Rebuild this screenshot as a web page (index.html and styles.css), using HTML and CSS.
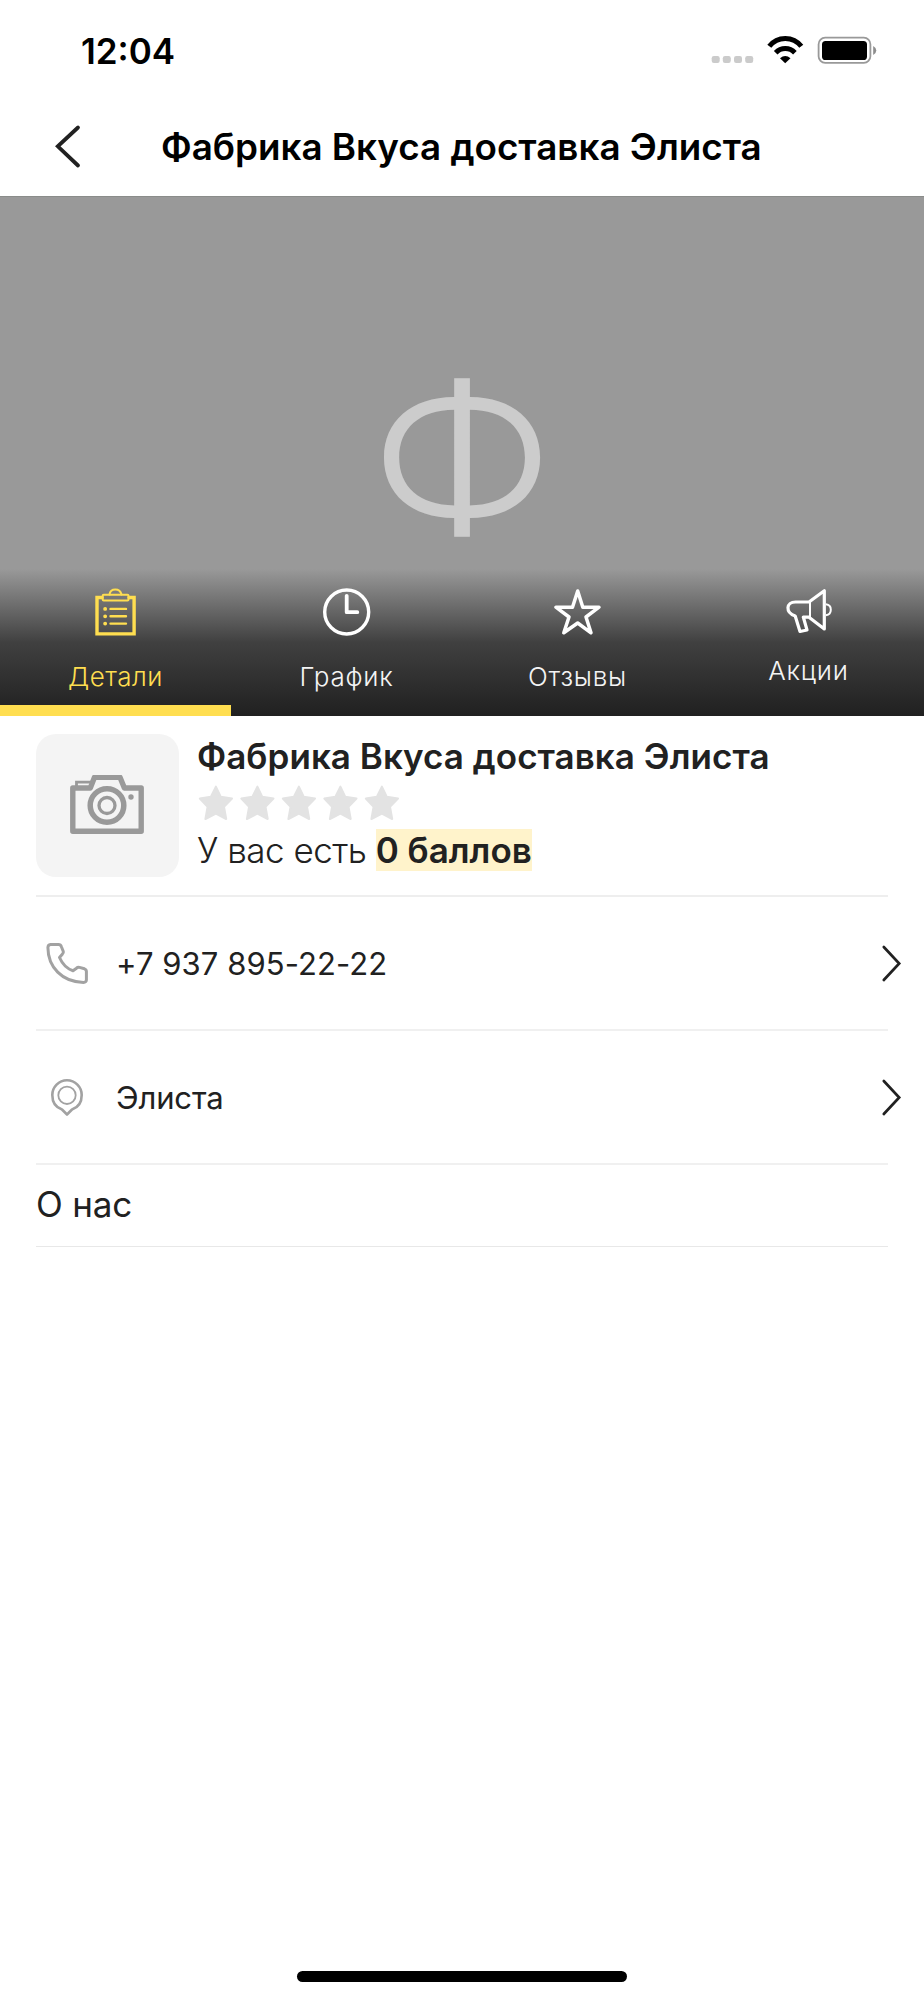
FILE: index.html
```html
<!DOCTYPE html>
<html lang="ru">
<head>
<meta charset="utf-8">
<title>Фабрика Вкуса доставка Элиста</title>
<link rel="stylesheet" href="styles.css">
</head>
<body>
<div class="screen">
  <header class="status">
    <span class="clock">12:04</span>
    <svg class="status-icons" width="168" height="30" viewBox="710 35 168 30">
      <g fill="#cbcbcb">
        <rect x="711.7" y="56" width="8" height="7" rx="2.2"/><rect x="722.8" y="56" width="8" height="7" rx="2.2"/><rect x="734" y="56" width="8" height="7" rx="2.2"/><rect x="745.2" y="56" width="8" height="7" rx="2.2"/>
      </g>
      <g fill="none" stroke="#000" stroke-width="5">
        <path d="M769.3 46.3A20.2 20.2 0 0 1 801.3 46.3"/>
        <path d="M775.7 52.7A13.2 13.2 0 0 1 794.9 52.7"/>
      </g>
      <path d="M780 58.2Q785.2 53.6 790.5 58.2L785.2 63.2Z"/>
      <rect x="818.6" y="37.6" width="51.8" height="25.2" rx="6.6" fill="none" stroke="#999" stroke-width="1.8"/>
      <rect x="822" y="41" width="45" height="19" rx="3.6"/>
      <path d="M873.2 46Q876.3 47.6 876.3 50.4T873.2 55Z" fill="#8d8d8d"/>
    </svg>
  </header>
  <nav class="navbar">
    <svg class="back" width="30" height="46" viewBox="53 123 30 46"><path d="M78 127.5L57.8 146.3L78 165.5" fill="none" stroke="#212121" stroke-width="3.8" stroke-linecap="round"/></svg>
    <h1 class="title">Фабрика Вкуса доставка Элиста</h1>
  </nav>
  <section class="hero">
    <div class="letter">Ф</div>
    <div class="tabs">
      <a class="tab active">
        <svg width="50" height="52" viewBox="91 585 50 52" fill="none" stroke="#ffde50" stroke-linecap="round" stroke-linejoin="round">
          <path stroke-width="3.4" stroke-linejoin="miter" d="M102 597.5H97V633.9H134.1V597.5H129"/>
          <rect x="102.7" y="594.7" width="25.8" height="5.8" rx="1" stroke-width="2"/>
          <path stroke-width="2" d="M109.5 594.5C110.5 587.8 120 587.8 121.5 594.5"/>
          <path stroke-width="2.4" d="M110.5 608.9H126M110.5 616.3H126M110.5 623.6H126"/>
          <path stroke-width="3.8" d="M105.1 608.9h.1M105.1 616.3h.1M105.1 623.6h.1"/>
        </svg>
        <span class="label">Детали</span>
      </a>
      <a class="tab">
        <svg width="50" height="52" viewBox="322 585 50 52" fill="none" stroke="#fff" stroke-linecap="round" stroke-linejoin="round">
          <circle cx="346.7" cy="612" r="22" stroke-width="3.4"/><path stroke-width="3.8" d="M346.7 595.8V612.2H357.3"/>
        </svg>
        <span class="label wide">График</span>
      </a>
      <a class="tab">
        <svg width="50" height="52" viewBox="553 585 50 52" fill="none" stroke="#fff" stroke-linejoin="round">
          <path stroke-width="3.5" d="M577.7 591L572.5 607.2H555.9L569 617L563.8 632.8L577.7 623L591 632.8L586 617L599 607.2H582.8Z"/>
        </svg>
        <span class="label wide">Отзывы</span>
      </a>
      <a class="tab high">
        <svg width="50" height="52" viewBox="784 585 50 52" fill="none" stroke="#fff" stroke-linejoin="round">
          <path stroke-width="3.2" d="M809 602L824.3 590.7V629L809 617.2L803.3 617L807 630L800 631.5L795.2 616C785 612.5 786 602 795.5 602Z"/>
          <path stroke-width="2" d="M810 602V617M826 604.3C832.4 605 832.4 614.5 826 615.2"/>
        </svg>
        <span class="label wide">Акции</span>
      </a>
    </div>
  </section>
  <main class="details">
    <section class="company">
      <div class="photo">
        <svg width="78" height="62" viewBox="69 774.5 78 62" fill="none" stroke="#999">
          <path stroke-width="5.4" stroke-linejoin="round" d="M72.8 787.5H90.3L94.5 776.8H120L124.4 787.5H141.2V830.7H72.8Z"/>
          <path stroke-width="2.8" d="M76.5 786V781.6H91"/>
          <circle cx="107" cy="805" r="16.8" stroke-width="5.5"/><circle cx="107" cy="805" r="8" stroke-width="3.3"/>
          <circle cx="131" cy="796.5" r="2.7" fill="#999" stroke="none"/>
        </svg>
      </div>
      <div class="info">
        <h2 class="name">Фабрика Вкуса доставка Элиста</h2>
        <svg class="stars" width="204" height="36" viewBox="0 0 204 36" fill="#e3e3e3" stroke="#e3e3e3" stroke-width="2" stroke-linejoin="round">
          <defs><path id="star" d="M17.9 1.6L22.7 11.8L34 13.6L26 21.8L28.2 34L17.9 28.6L7.4 34L9.6 21.8L1.8 13.6L12.9 11.8Z"/></defs>
          <use href="#star"/><use href="#star" x="41.5"/><use href="#star" x="83"/><use href="#star" x="124.5"/><use href="#star" x="166"/>
        </svg>
        <p class="points">У вас есть <mark>0 баллов</mark></p>
      </div>
    </section>
    <a class="row">
      <svg class="icon" width="46" height="46" viewBox="44 940 46 46" fill="none" stroke="#a2a2a2" stroke-width="3" stroke-linejoin="round">
        <path d="M50.5 944.5H58.5Q60.7 944.5 61.3 946.5L63.3 951.5Q63.6 953 62.5 954L59.5 957.5Q64 967.8 73 970.7L76.5 968.2Q77.8 967 79.5 967.4L84.5 968.8Q86.4 969.5 86.4 971.5V980Q86.2 982.4 83.5 982.4C62 982 48 967 47.9 947.5Q48 944.8 50.5 944.5Z"/>
      </svg>
      <span class="text phone">+7 937 895-22-22</span>
      <svg class="chevron" width="24" height="40" viewBox="880 943 24 40"><path d="M883.8 947L899.2 963.5L883.8 980" fill="none" stroke="#212121" stroke-width="2.7" stroke-linecap="round"/></svg>
    </a>
    <a class="row">
      <svg class="icon" width="46" height="46" viewBox="44 1074 46 46" fill="none" stroke="#a2a2a2" stroke-linejoin="round">
        <path stroke-width="2.6" d="M67 1114.5L62 1109.5C56 1107.5 52.3 1102 52.3 1095A14.7 14.7 0 0 1 81.7 1095C81.7 1102 78 1107.5 72 1109.5Z"/>
        <circle cx="67" cy="1095.3" r="8.7" stroke-width="1.8"/>
      </svg>
      <span class="text city">Элиста</span>
      <svg class="chevron" width="24" height="40" viewBox="880 943 24 40"><path d="M883.8 947L899.2 963.5L883.8 980" fill="none" stroke="#212121" stroke-width="2.7" stroke-linecap="round"/></svg>
    </a>
    <h3 class="about">О нас</h3>
  </main>
  <div class="home"></div>
</div>
</body>
</html>
```
FILE: styles.css
```css
* { box-sizing: border-box; }
body { margin: 0; background: #fff; font-family: Inter, "Liberation Sans", sans-serif; color: #212121; }
h1, h2, h3, p { margin: 0; font-weight: 400; white-space: nowrap; }
svg { display: block; flex: none; }
.screen { width: 924px; height: 2000px; display: flex; flex-direction: column; overflow: hidden; }
.status { height: 100px; display: flex; justify-content: space-between; align-items: flex-start; padding: 35px 46px 0 81px; }
.clock { font-size: 35px; line-height: 32px; font-weight: 600; color: #000; }
.navbar { height: 96px; display: flex; align-items: flex-start; padding: 23px 0 0 53px; }
.title { font-size: 36.8px; line-height: 44px; padding-top: 2px; margin-left: 78px; font-weight: 600; color: #000; }
.hero { height: 520px; background: #999; display: flex; flex-direction: column; justify-content: space-between; border-top: 1px solid #8a8c8a; }
.letter { height: 372px; padding-top: 161px; text-align: center; font-size: 196px; line-height: 200px; font-weight: 300; color: #ccc; transform: scaleX(1.155); }
.tabs { height: 147px; display: flex; background: linear-gradient(#999 0, #404040 50%, #202020 100%); }
.tab { flex: 1; display: flex; flex-direction: column; align-items: center; padding-top: 16px; color: #f4f4f4; }
.label { font-size: 26px; line-height: 32px; margin-top: 24px; font-weight: 300; letter-spacing: .5px; }
.label.wide { letter-spacing: .8px; }
.high .label { margin-top: 18px; }
.active { color: #ffde50; border-bottom: 11px solid #ffde50; }
.details { padding: 0 36px; flex: 1; }
.company { height: 181px; display: flex; padding-top: 18px; border-bottom: 2px solid #eee; }
.photo { width: 143px; height: 143px; border-radius: 20px; background: #f4f4f4; display: flex; align-items: center; justify-content: center; }
.info { margin-left: 18px; }
.name { font-size: 35px; line-height: 44px; font-weight: 600; letter-spacing: .04px; }
.stars { margin: 7px 0 0 1px; }
.points { font-size: 35px; line-height: 43px; margin-top: 8px; font-weight: 300; letter-spacing: -.5px; }
.points mark { background: #fff3cb; color: inherit; font-weight: 600; letter-spacing: 0; }
.row { height: 134px; display: flex; align-items: center; border-bottom: 2px solid #f0f0f0; padding-left: 8px; }
.text { font-size: 31px; line-height: 40px; margin: 2px 0 0 26px; }
.phone { letter-spacing: .08px; }
.city { letter-spacing: -.15px; }
.chevron { margin-left: auto; margin-right: -16px; }
.about { height: 82px; font-size: 35px; line-height: 79px; letter-spacing: -.2px; border-bottom: 1px solid #e8e8e8; }
.home { width: 330px; height: 11px; border-radius: 6px; background: #000; margin: 0 auto 18px; }
```
